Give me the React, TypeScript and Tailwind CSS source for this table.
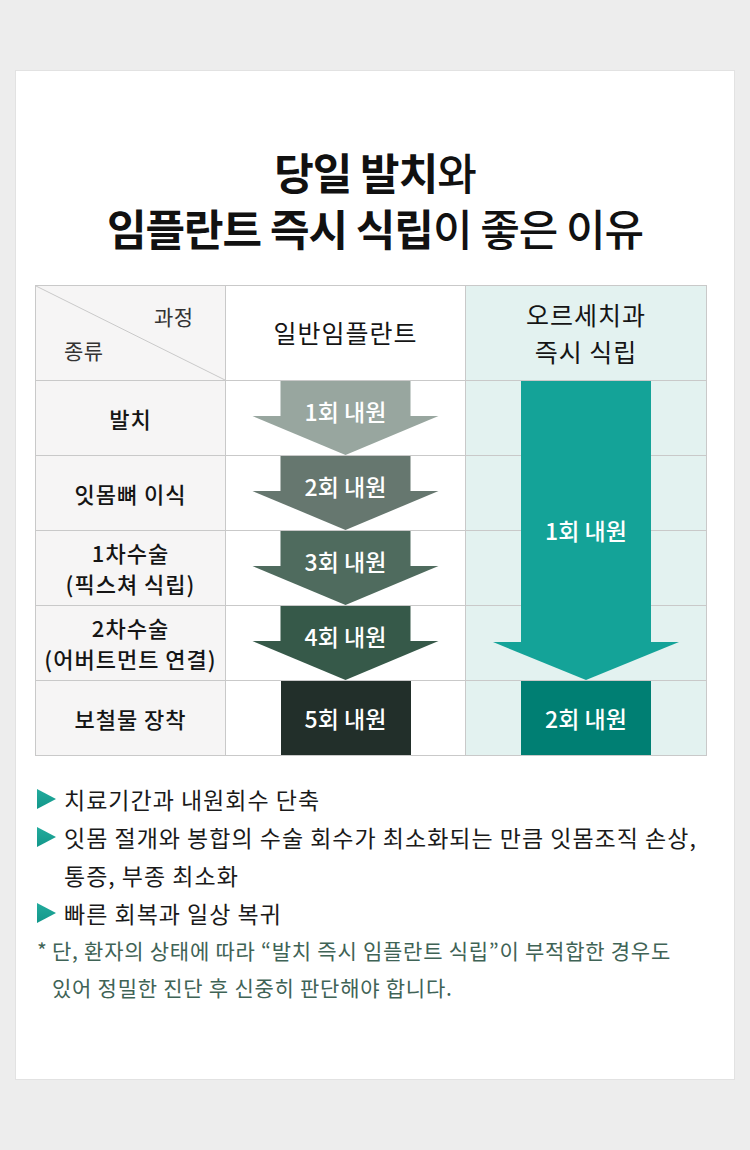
const rowStart = ["row-start-2", "row-start-3", "row-start-4", "row-start-5", "row-start-6"]

const rows = [
  { label: ["발치"], visit: "1회 내원", color: "#98a69f" },
  { label: ["잇몸뼈 이식"], visit: "2회 내원", color: "#66776f" },
  { label: ["1차수술", "(픽스쳐 식립)"], visit: "3회 내원", color: "#4f6b5e" },
  { label: ["2차수술", "(어버트먼트 연결)"], visit: "4회 내원", color: "#365949" },
  { label: ["보철물 장착"], visit: "5회 내원", color: "#222f2a" },
]

const bullets = [
  "치료기간과 내원회수 단축",
  "잇몸 절개와 봉합의 수술 회수가 최소화되는 만큼 잇몸조직 손상, 통증, 부종 최소화",
  "빠른 회복과 일상 복귀",
]

const ArrowShape = ({ color, w, h, body }: { color: string; w: number; h: number; body: number }) => (
  <svg className="absolute inset-0" width={w} height={h} viewBox={`0 0 ${w} ${h}`}>
    <rect x={(w - 130) / 2} y={0} width={130} height={body} fill={color} />
    <polygon points={`${(w - 186) / 2},${body} ${(w + 186) / 2},${body} ${w / 2},${h}`} fill={color} />
  </svg>
)

const Triangle = () => (
  <svg width="19" height="20" viewBox="0 0 19 20" className="shrink-0">
    <defs>
      <linearGradient id="tri" x1="0" y1="0" x2="0" y2="1">
        <stop offset="0" stopColor="#22ab9d" />
        <stop offset="1" stopColor="#12978a" />
      </linearGradient>
    </defs>
    <polygon points="0,0 19,10 0,20" fill="url(#tri)" />
  </svg>
)

const App = () => {
  return (
    <div className="min-h-[1150px] bg-[#ededed] pt-[70px] px-[15px] font-['Noto_Sans_CJK_KR',sans-serif] text-[#151515]">
      <div className="h-[1010px] bg-white border border-[#e2e2e2] pt-[72px]">

        <h1 className="text-center text-[43px] leading-[56px] tracking-[-1px] text-[#111]">
          <span className="font-bold">당일 발치</span><span className="font-medium">와</span>
          <br />
          <span className="font-bold">임플란트 즉시 식립</span><span className="font-medium">이 좋은 이유</span>
        </h1>

        <div className="mt-[30px] ml-[19px] w-[672px] grid grid-cols-[189px_239px_240px] grid-rows-[94px_repeat(5,74px)] gap-px p-px bg-[#c9c9c9]">

          {/* header */}
          <div className="col-start-1 row-start-1 relative bg-[#f6f5f5] text-[21px] tracking-[0.5px] text-[#333]">
            <svg className="absolute inset-0" width="189" height="94" viewBox="0 0 189 94">
              <line x1="0" y1="0" x2="189" y2="94" stroke="#c9c9c9" strokeWidth="1" />
            </svg>
            <span className="absolute left-[118px] top-[16px] leading-[28px]">과정</span>
            <span className="absolute left-[28px] top-[50px] leading-[28px]">종류</span>
          </div>
          <div className="col-start-2 row-start-1 bg-white flex items-center justify-center text-[25px] tracking-[1px]">
            일반임플란트
          </div>
          <div className="col-start-3 row-start-1 bg-[#e3f2f0] flex flex-col items-center justify-center text-[25px] leading-[37px] tracking-[1px]">
            <span>오르세치과</span>
            <span>즉시 식립</span>
          </div>

          {rows.map((r, i) => (
            <div key={"l" + i} className={`col-start-1 ${rowStart[i]} bg-[#f6f5f5] flex flex-col items-center justify-center text-[22px] leading-[31px] font-medium tracking-[1px]`}>
              {r.label.map((t) => <span key={t}>{t}</span>)}
            </div>
          ))}

          {rows.map((r, i) => (
            <div key={"a" + i} className={`col-start-2 ${rowStart[i]} relative bg-white`}>
              {i < 4 ? (
                <>
                  <ArrowShape color={r.color} w={239} h={74} body={35} />
                  <div className="relative pt-[18px] text-center text-white text-[23px] leading-[25px] font-medium">{r.visit}</div>
                </>
              ) : (
                <div className="mx-auto w-[130px] h-full bg-[#222f2a] flex items-center justify-center text-white text-[23px] font-medium">{r.visit}</div>
              )}
            </div>
          ))}

          {rows.map((r, i) => (
            <div key={"c" + i} className={`col-start-3 ${rowStart[i]} bg-[#e3f2f0]`}>
              {i === 4 && (
                <div className="mx-auto w-[130px] h-full bg-[#007f73] flex items-center justify-center text-white text-[23px] font-medium">2회 내원</div>
              )}
            </div>
          ))}

          <div className="col-start-3 row-start-2 row-span-4 relative flex items-center justify-center">
            <ArrowShape color="#14a398" w={240} h={299} body={261} />
            <span className="relative text-white text-[23px] font-medium">1회 내원</span>
          </div>
        </div>

        <ul className="mt-[24px] ml-[21px] mr-[20px] text-[23px] leading-[38px] tracking-[1px] text-[#1a1a1a]">
          {bullets.map((b) => (
            <li key={b} className="flex items-start">
              <span className="h-[38px] flex items-center mr-[8px]"><Triangle /></span>
              <span>{b}</span>
            </li>
          ))}
          <li className="flex items-start text-[21px] leading-[37px] tracking-[0.75px] text-[#3f6356]">
            <span className="w-[15px] shrink-0">*</span>
            <span>단, 환자의 상태에 따라 “발치 즉시 임플란트 식립”이 부적합한 경우도<br />있어 정밀한 진단 후 신중히 판단해야 합니다.</span>
          </li>
        </ul>
      </div>
    </div>
  )
}

export default App
